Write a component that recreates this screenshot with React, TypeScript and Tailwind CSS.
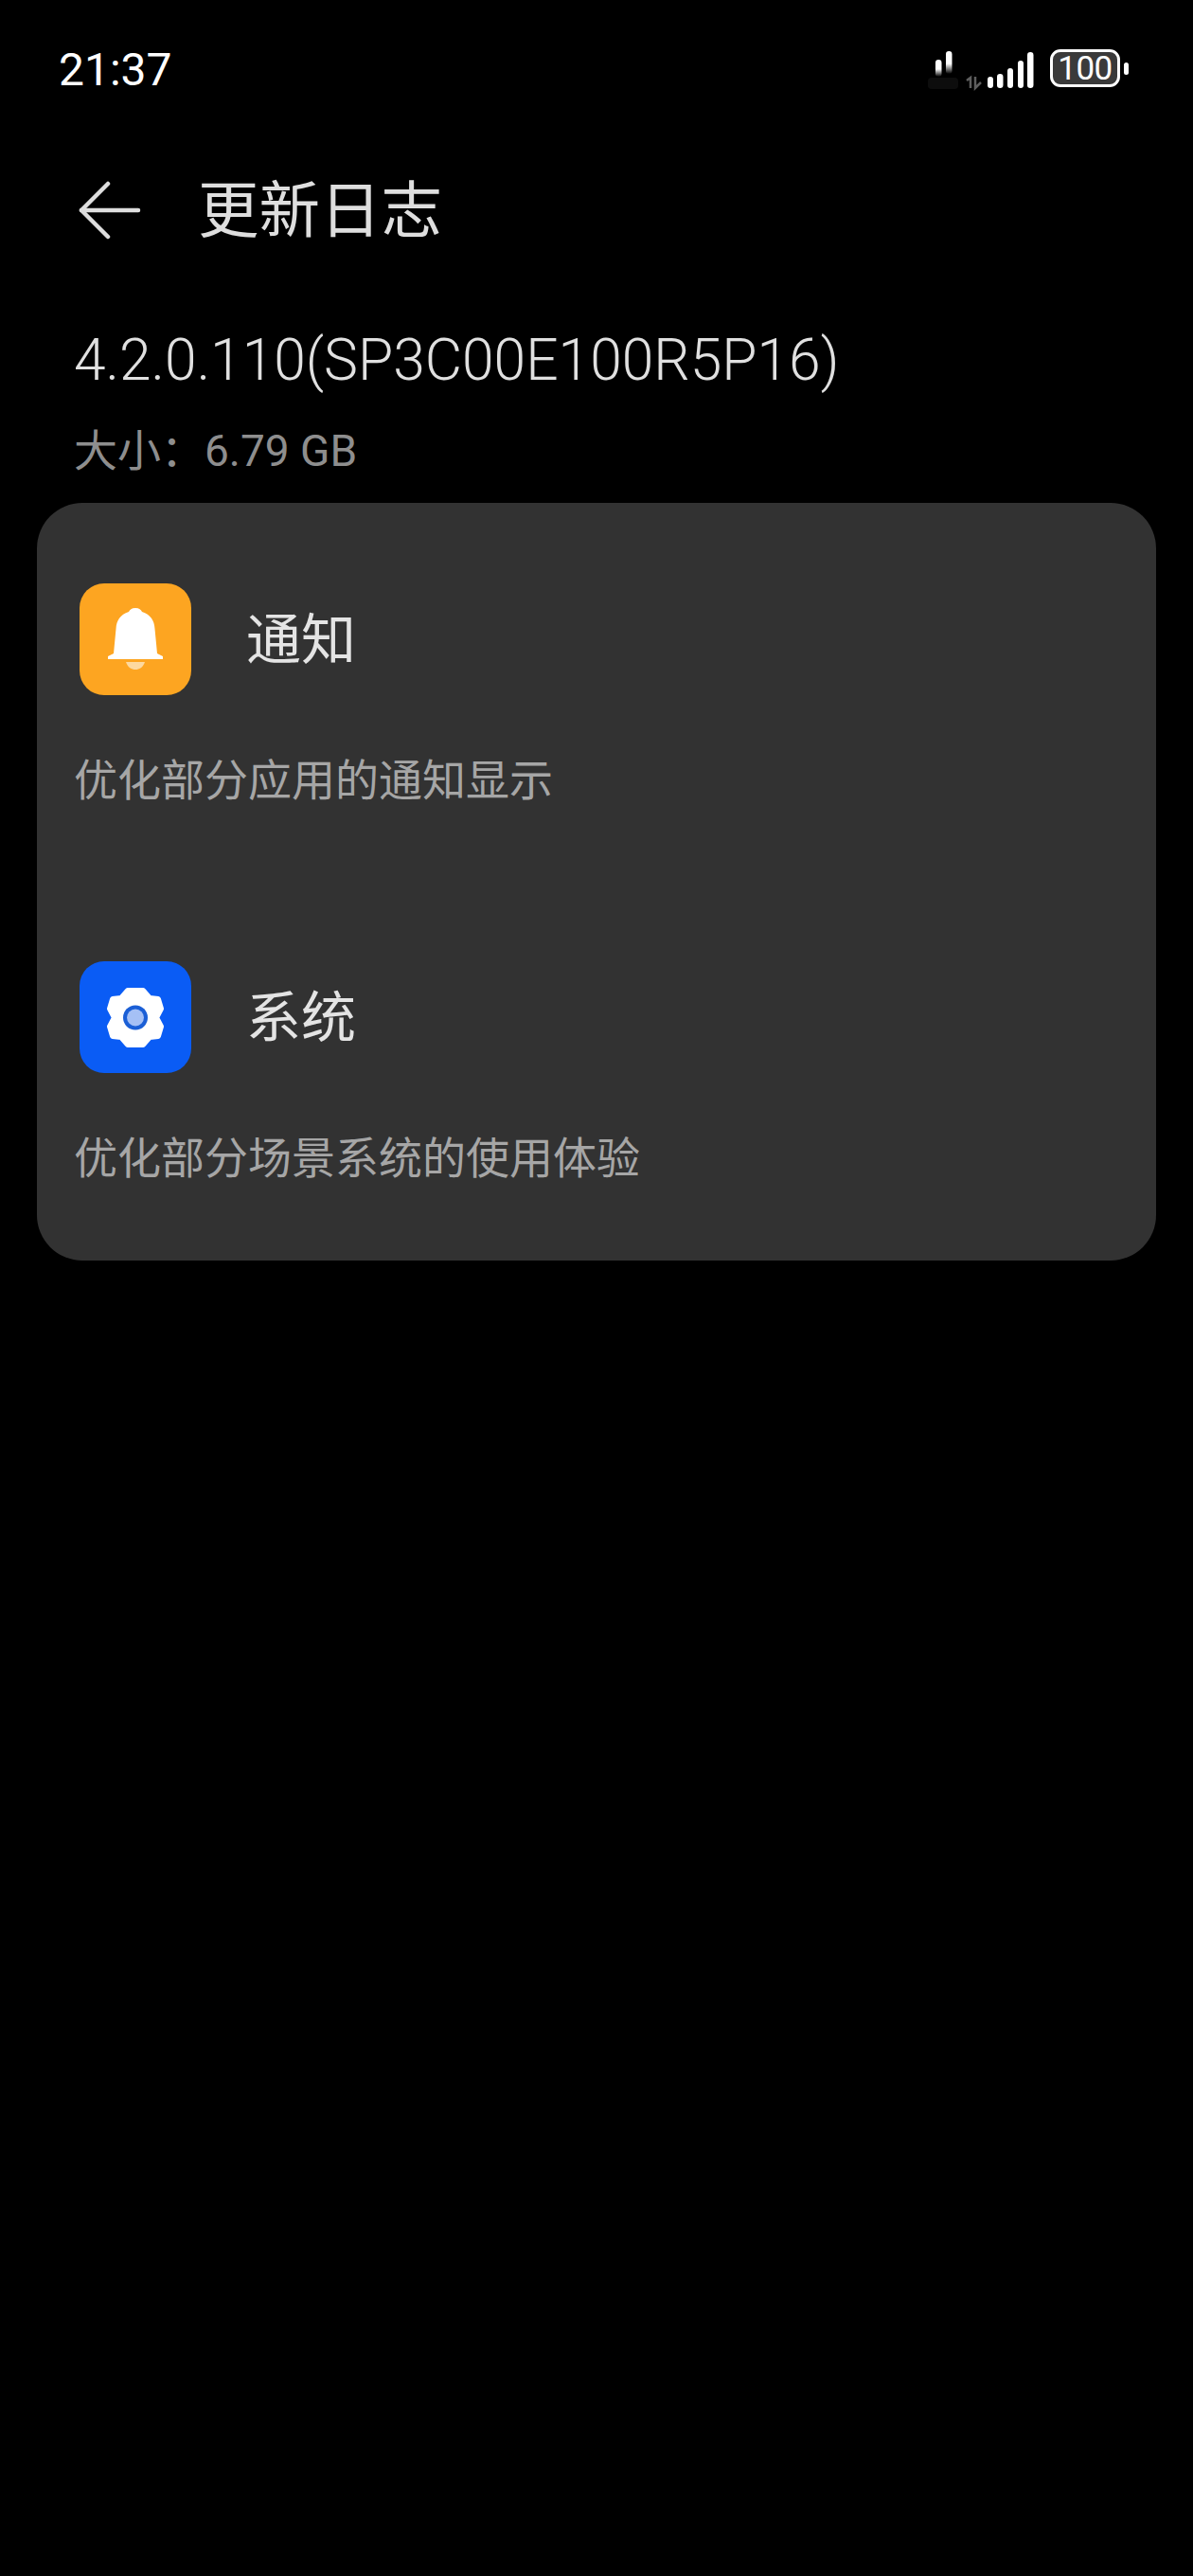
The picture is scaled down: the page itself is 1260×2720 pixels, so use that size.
const font = "font-['Roboto','Noto_Sans_CJK_SC',sans-serif]";

function BackArrow() {
  return (
    <svg width="66" height="62" viewBox="0 0 66 62" fill="none" stroke="#dedede" strokeWidth="4.5" strokeLinecap="round" strokeLinejoin="round">
      <path d="M31 3 L3 31 L31 59" />
      <path d="M3 31 H63" />
    </svg>
  );
}

function StatusIcons() {
  return (
    <div className="flex items-start">
      <svg width="116" height="44" viewBox="0 0 116 44" className="mr-[15px]">
        <defs>
          <linearGradient id="fade" x1="0" y1="0" x2="0" y2="1">
            <stop offset="0.55" stopColor="#fff" />
            <stop offset="1" stopColor="#fff" stopOpacity="0" />
          </linearGradient>
        </defs>
        <rect x="10" y="11" width="6.5" height="18" rx="3.2" fill="url(#fade)" />
        <rect x="21" y="2" width="6.5" height="24" rx="3.2" fill="url(#fade)" />
        <rect x="2" y="30" width="32" height="12" rx="4" fill="#0d0d0d" />
        <path d="M47 41 V30 L43 33 M52 29 V41 L58 35" stroke="#5e5e5e" strokeWidth="2.5" fill="none" />
        <rect x="65" y="29" width="6" height="12" rx="3" fill="#fff" />
        <rect x="75" y="26" width="6.500" height="15" rx="3.2" fill="#fff" />
        <rect x="86" y="20" width="6" height="21" rx="3" fill="#fff" />
        <rect x="97" y="12" width="6" height="29" rx="3" fill="#fff" />
        <rect x="107" y="3" width="6.500" height="38" rx="3.2" fill="#fff" />
      </svg>
      <div className="flex items-center">
        <div className={`flex h-[40px] w-[74px] items-center justify-center rounded-[11px] border-[3px] border-white bg-[#3a3a3a] text-[35px] leading-none tracking-[-0.5px] text-white ${font}`}>
          100
        </div>
        <div className="ml-[4px] h-[13px] w-[5px] rounded-full bg-white" />
      </div>
    </div>
  );
}

function BellIcon() {
  return (
    <div className="flex h-[118px] w-[118px] items-center justify-center rounded-[26px] bg-[#fda521]">
      <svg width="60" height="66" viewBox="0 0 60 66" fill="none">
        <path
          d="M30 0 C34 0 36 2 37 4 C46 7 50 13 50.500 22 L53 48 L59 51 L59 54 L1 54 L1 51 L7 48 L9.500 22 C10 13 14 7 23 4 C24 2 26 0 30 0 Z"
          fill="#ffffff"
        />
        <path d="M20 57 H40 C38 63 34 65 30 65 C26 65 22 63 20 57 Z" fill="#fdd9a0" />
      </svg>
    </div>
  );
}

function GearIcon() {
  return (
    <div className="flex h-[118px] w-[118px] items-center justify-center rounded-[26px] bg-[#0a5cf5]">
      <svg width="60" height="63" viewBox="0 0 60 63">
        <polygon
          points="22,3 38,3 45,11 54,12 57,22 52,31.500 57,41 54,51 45,52 38,60 22,60 15,52 6,51 3,41 8,31.500 3,22 6,12 15,11"
          fill="#ffffff"
          stroke="#ffffff"
          strokeWidth="6"
          strokeLinejoin="round"
        />
        <circle cx="30" cy="31.500" r="13" fill="#1b5fd6" />
        <circle cx="30" cy="31.500" r="9" fill="#a5c0f5" />
      </svg>
    </div>
  );
}

function LogSection({ icon, title, desc }: { icon: React.ReactNode; title: string; desc: string }) {
  return (
    <div>
      <div className="flex items-center pl-[45px]">
        {icon}
        <div className="ml-[58px] pt-[2px] text-[58px] leading-[118px] text-[#e4e4e4]">{title}</div>
      </div>
      <div className="mt-[57px] pl-[39px] text-[46px] leading-[64px] text-[#a6a6a6]">{desc}</div>
    </div>
  );
}

export default function App() {
  return (
    <div className={`h-[2720px] w-[1260px] overflow-hidden bg-black ${font}`}>
      <div className="flex h-[132px] items-center justify-between pl-[62px] pr-[68px] pt-[16px]">
        <div className="text-[48px] leading-none text-white">21:37</div>
        <StatusIcons />
      </div>

      <div className="mt-[45px] flex h-[90px] items-center pl-[83px]">
        <BackArrow />
        <div className="ml-[60px] pt-[2px] text-[64.5px] leading-none text-[#dedede]">更新日志</div>
      </div>

      <div className="mt-[78px] pl-[78px] text-[60.5px] font-light leading-[72px] text-[#e0e0e0]">
        4.2.0.110(SP3C00E100R5P16)
      </div>
      <div className="mt-[29px] pl-[78px] text-[46px] leading-[60px] text-[#8e8e8e]">大小：6.79 GB</div>

      <div className="mx-[39px] mt-[25px] h-[800px] rounded-[48px] bg-[#323232] pt-[84px]">
        <LogSection icon={<BellIcon />} title="通知" desc="优化部分应用的通知显示" />
        <div className="mt-[158px]">
          <LogSection icon={<GearIcon />} title="系统" desc="优化部分场景系统的使用体验" />
        </div>
      </div>
    </div>
  );
}
